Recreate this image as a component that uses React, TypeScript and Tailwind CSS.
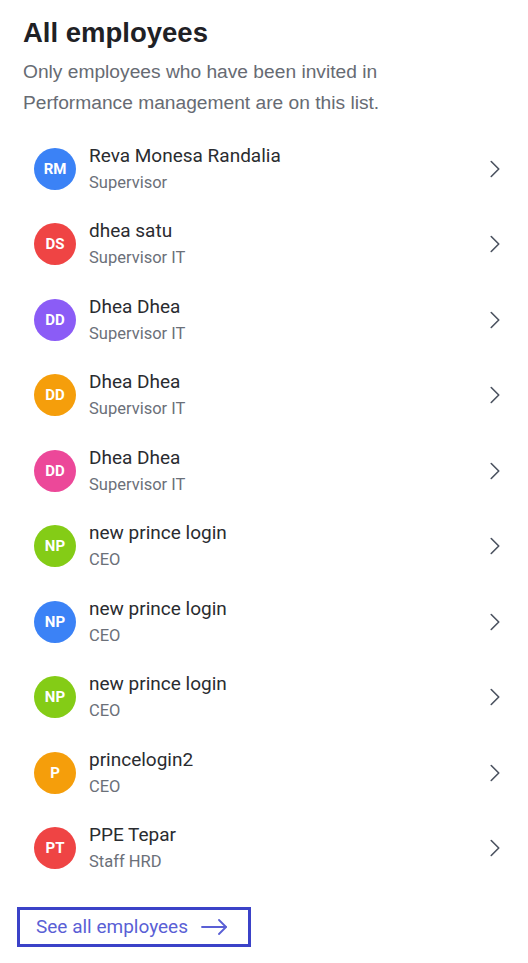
import { ChevronRight } from 'lucide-react'

// Employees shown in the list
const employees = [
  { initials: 'RM', name: 'Reva Monesa Randalia', role: 'Supervisor', color: 'bg-[#3b82f6]' },
  { initials: 'DS', name: 'dhea satu', role: 'Supervisor IT', color: 'bg-[#ef4444]' },
  { initials: 'DD', name: 'Dhea Dhea', role: 'Supervisor IT', color: 'bg-[#8b5cf6]' },
  { initials: 'DD', name: 'Dhea Dhea', role: 'Supervisor IT', color: 'bg-[#f59e0b]' },
  { initials: 'DD', name: 'Dhea Dhea', role: 'Supervisor IT', color: 'bg-[#ec4899]' },
  { initials: 'NP', name: 'new prince login', role: 'CEO', color: 'bg-[#84cc16]' },
  { initials: 'NP', name: 'new prince login', role: 'CEO', color: 'bg-[#3b82f6]' },
  { initials: 'NP', name: 'new prince login', role: 'CEO', color: 'bg-[#84cc16]' },
  { initials: 'P', name: 'princelogin2', role: 'CEO', color: 'bg-[#f59e0b]' },
  { initials: 'PT', name: 'PPE Tepar', role: 'Staff HRD', color: 'bg-[#ef4444]' },
]

export default function App() {
  return (
    <div className="min-h-screen w-[528px] bg-white font-['Roboto',sans-serif]">
      <div className="pt-4 pl-[23px] pr-[18px]">
        {/* Header */}
        <h1 className="font-['Liberation_Sans',Arial,sans-serif] font-bold text-[27.5px] leading-[33px] text-[#1f2125]">
          All employees
        </h1>
        <p className="mt-[7px] font-['Liberation_Sans',Arial,sans-serif] text-[19.2px] leading-[31px] text-[#676b73]">
          Only employees who have been invited in
          <br />
          Performance management are on this list.
        </p>

        {/* Employee list */}
        <ul className="mt-[13px] flex flex-col">
          {employees.map((e, i) => (
            <li key={i} className="h-[75.5px] flex items-center pl-[11px]">
              <div
                className={`w-[42px] h-[42px] shrink-0 rounded-full flex items-center justify-center text-white font-bold text-[15px] ${e.color}`}
              >
                {e.initials}
              </div>
              <div className="ml-[13px] flex-1 flex flex-col">
                <span className="text-[19px] leading-[27px] font-normal text-[#2a2c30]">{e.name}</span>
                <span className="text-[16.5px] leading-[27px] text-[#6b7079]">{e.role}</span>
              </div>
              <ChevronRight className="w-[30px] h-[30px] text-[#4b5260]" strokeWidth={1.3} />
            </li>
          ))}
        </ul>
      </div>

      {/* Footer link */}
      <div className="pl-[17px] mt-[21px]">
        <button className="h-10 w-[234px] border-[3px] border-[#3b42c8] flex items-center pl-4 text-[#5a5fd5] text-[19px]">
          See all employees
          <svg className="ml-[13px]" width="26" height="16" viewBox="0 0 26 16" fill="none" stroke="currentColor" strokeWidth="1.8" strokeLinecap="round" strokeLinejoin="round">
            <path d="M1 8h24" />
            <path d="M18 1l7 7-7 7" />
          </svg>
        </button>
      </div>
    </div>
  )
}
